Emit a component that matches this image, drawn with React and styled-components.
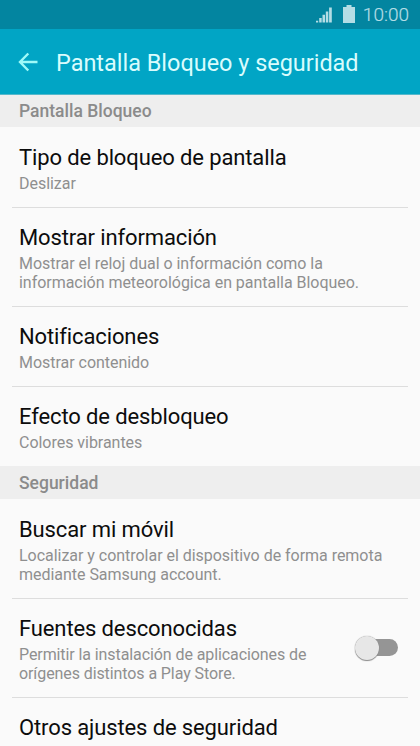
import styled, { createGlobalStyle } from "styled-components";

const lockItems = [
  { title: "Tipo de bloqueo de pantalla", lines: ["Deslizar"] },
  {
    title: "Mostrar información",
    lines: [
      "Mostrar el reloj dual o información como la",
      "información meteorológica en pantalla Bloqueo.",
    ],
  },
  { title: "Notificaciones", lines: ["Mostrar contenido"] },
  { title: "Efecto de desbloqueo", lines: ["Colores vibrantes"] },
];

const securityItems = [
  {
    title: "Buscar mi móvil",
    lines: [
      "Localizar y controlar el dispositivo de forma remota",
      "mediante Samsung account.",
    ],
  },
  {
    title: "Fuentes desconocidas",
    lines: [
      "Permitir la instalación de aplicaciones de",
      "orígenes distintos a Play Store.",
    ],
    toggle: true,
  },
  { title: "Otros ajustes de seguridad", lines: [] },
];

function SettingsList({ items }) {
  return (
    <List>
      {items.map((item) => (
        <Row key={item.title}>
          <RowText>
            <Title>{item.title}</Title>
            {item.lines.map((line) => (
              <Summary key={line} $tight={item.toggle}>
                {line}
              </Summary>
            ))}
          </RowText>
          {item.toggle && (
            <Toggle type="button" role="switch" aria-checked="false">
              <Track />
              <Thumb />
            </Toggle>
          )}
        </Row>
      ))}
    </List>
  );
}

function App() {
  return (
    <>
      <GlobalStyle />
      <Screen>
        <StatusBar>
          <SignalIcon viewBox="0 0 16 16">
            <path d="M0 13.8h2.2v1.7H0zM3.2 11h2.5v4.5H3.2zM6.5 7.8H9v7.7H6.5zM9.8 4.5h2.5v11H9.8zM13.1 0.5h2.7v15h-2.7z" />
          </SignalIcon>
          <BatteryIcon viewBox="0 0 12 18">
            <path d="M3.5 0h5v2H12v16H0V2h3.5z" />
          </BatteryIcon>
          <Clock>10:00</Clock>
        </StatusBar>
        <AppBar>
          <BackIcon viewBox="0 0 20 20">
            <path d="M19.5 10H2.5M10.3 1.5L2 10l8.3 8.5" />
          </BackIcon>
          <PageTitle>Pantalla Bloqueo y seguridad</PageTitle>
        </AppBar>
        <SectionHeader>Pantalla Bloqueo</SectionHeader>
        <SettingsList items={lockItems} />
        <SectionHeader $offset={1}>Seguridad</SectionHeader>
        <SettingsList items={securityItems} />
      </Screen>
    </>
  );
}

const GlobalStyle = createGlobalStyle`
  * {
    box-sizing: border-box;
  }

  body {
    margin: 0;
    overflow: hidden;
    font-family: Roboto, "Liberation Sans", sans-serif;
  }
`;

const Screen = styled.main`
  width: 420px;
  height: 746px;
  overflow: hidden;
  background-color: #fafafa;
`;

const StatusBar = styled.div`
  display: flex;
  align-items: center;
  justify-content: flex-end;
  height: 29px;
  padding-right: 11px;
  background-color: #0385a0;
  color: #b4dde5;
`;

const SignalIcon = styled.svg`
  width: 16px;
  height: 16px;
  margin-right: 11px;
  fill: currentColor;
`;

const BatteryIcon = styled.svg`
  width: 12px;
  height: 18px;
  margin: 0 8px 1px 0;
  fill: currentColor;
`;

const Clock = styled.span`
  font-size: 19px;
  font-weight: 300;
  line-height: 29px;
  -webkit-text-stroke: 0.2px currentColor;
`;

const AppBar = styled.header`
  display: flex;
  align-items: center;
  height: 66px;
  padding-left: 18px;
  background-color: #01a5c5;
  border-bottom: 1px solid #55b8cb;
`;

const BackIcon = styled.svg`
  width: 20px;
  height: 20px;
  margin-right: 18px;
  fill: none;
  stroke: #9ffaf8;
  stroke-width: 2.4;
`;

const PageTitle = styled.h1`
  margin: 3px 0 0;
  font-size: 23.45px;
  font-weight: 400;
  color: #d9fcfd;
`;

const SectionHeader = styled.h2`
  height: 32.45px;
  margin: 0;
  padding: ${({ $offset }) => $offset || 0}px 0 0 19px;
  font-size: 17.5px;
  font-weight: 500;
  line-height: 33.4px;
  color: #8b8b8b;
  background-color: #eeeeee;
`;

const List = styled.ul`
  margin: 0;
  padding: 0;
  list-style: none;
`;

const Row = styled.li`
  display: flex;
  align-items: center;
  justify-content: space-between;
  margin: 0 12px;
  padding: 15.9px 10px 13.8px 7px;
  border-top: 1px solid #dddddd;

  &:first-child {
    border-top-color: transparent;
  }
`;

const RowText = styled.div`
  white-space: nowrap;
`;

const Title = styled.h3`
  margin: 0 0 2px;
  font-size: 22px;
  font-weight: 400;
  line-height: 28px;
  letter-spacing: -0.12px;
  color: #0c0c0c;
`;

const Summary = styled.p`
  margin: 0;
  font-size: 16px;
  line-height: 19.2px;
  letter-spacing: ${({ $tight }) => ($tight ? "-0.09px" : "-0.03px")};
  color: #8f8f8f;
`;

const Toggle = styled.button`
  display: flex;
  align-items: center;
  width: 43px;
  height: 28px;
  margin-bottom: 2px;
  padding: 0;
  border: none;
  background: none;
`;

const Thumb = styled.span`
  order: -1;
  z-index: 1;
  flex: none;
  width: 24px;
  height: 24px;
  border-radius: 50%;
  background-color: #e7e7e7;
  box-shadow: 0 0 1px #888888, 0 1px 1px #888888;
`;

const Track = styled.span`
  flex: none;
  width: 30px;
  height: 17px;
  margin-left: -11px;
  border-radius: 9px;
  background-color: #959595;
`;

export default App;
